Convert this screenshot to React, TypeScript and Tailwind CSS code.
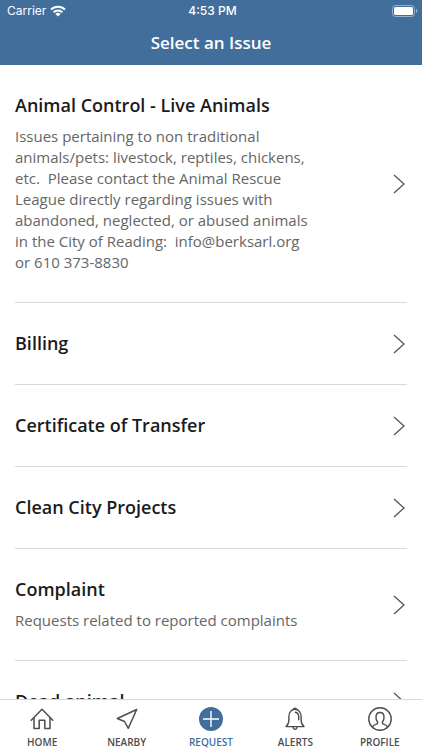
import type { ReactNode } from "react";
import clsx from "clsx";

interface Issue {
  id: string;
  title: string;
  description?: string;
}

interface Tab {
  label: string;
  icon: ReactNode;
  active?: boolean;
}

const issues: Issue[] = [
  {
    id: "animal-control",
    title: "Animal Control - Live Animals",
    description:
      "Issues pertaining to non traditional animals/pets: livestock, reptiles, chickens, etc.  Please contact the Animal Rescue League directly regarding issues with abandoned, neglected, or abused animals in the City of Reading:  info@berksarl.org or 610 373-8830",
  },
  { id: "billing", title: "Billing" },
  { id: "transfer", title: "Certificate of Transfer" },
  { id: "clean-city", title: "Clean City Projects" },
  { id: "complaint", title: "Complaint", description: "Requests related to reported complaints" },
  { id: "dead-animal", title: "Dead animal" },
];

function HomeIcon() {
  return (
    <svg width="24" height="24" viewBox="0 0 24 24" fill="none" stroke="currentColor" strokeWidth="1.5" strokeLinejoin="round" strokeLinecap="round" aria-hidden="true">
      <path d="M1.2 13.200 12 2.300l10.800 10.900" />
      <path d="M4 11v10.500h5.200v-8.300h5.600v8.300H20V11" />
    </svg>
  );
}

function NearbyIcon() {
  return (
    <svg width="24" height="24" viewBox="0 0 24 24" fill="none" stroke="currentColor" strokeWidth="1.5" strokeLinejoin="round" aria-hidden="true">
      <path d="M21.700 2.500 2.300 11.500l7.200 3 3.800 6.800z" />
    </svg>
  );
}

function RequestIcon() {
  return (
    <svg width="24" height="24" viewBox="0 0 24 24" aria-hidden="true">
      <circle cx="12" cy="12" r="12" fill="#426e9b" />
      <path d="M12 4v16M4 12h16" stroke="white" strokeWidth="1.4" />
    </svg>
  );
}

function AlertsIcon() {
  return (
    <svg width="24" height="24" viewBox="0 0 24 24" fill="none" stroke="currentColor" strokeWidth="1.4" strokeLinejoin="round" strokeLinecap="round" aria-hidden="true">
      <path d="M3 19.600c2-1.700 2.900-3.800 2.900-6.700V9.400c0-4 2.500-7.100 6.100-7.100s6.100 3.100 6.100 7.100v3.500c0 2.900.9 5 2.900 6.700z" />
      <path d="M10.500 2.300a1.600 1.600 0 0 1 3 0M10.200 20a1.850 1.850 0 1 0 3.600 0" />
      <path d="M12.300 5.200c2.200.3 3.400 2.200 3.400 4.600v3" />
    </svg>
  );
}

function ProfileIcon() {
  return (
    <svg width="24" height="24" viewBox="0 0 24 24" fill="none" stroke="currentColor" strokeWidth="1.4" strokeLinejoin="round" aria-hidden="true">
      <circle cx="12" cy="12" r="11.200" />
      <path d="M4.400 19.900c.5-1.400 1.700-2 3.600-2.500 1.200-.3 1.700-.8 1.700-1.700 0-.8-.6-1.200-1-2.100-.5-1.100-.7-2.200-.7-3.400 0-2.800 1.500-4.700 4-4.700s4 1.900 4 4.700c0 1.200-.2 2.300-.7 3.400-.4.900-1 1.300-1 2.100 0 .9.500 1.400 1.700 1.700 1.900.5 3.100 1.100 3.600 2.500" />
    </svg>
  );
}

const tabs: Tab[] = [
  { label: "HOME", icon: <HomeIcon /> },
  { label: "NEARBY", icon: <NearbyIcon /> },
  { label: "REQUEST", icon: <RequestIcon />, active: true },
  { label: "ALERTS", icon: <AlertsIcon /> },
  { label: "PROFILE", icon: <ProfileIcon /> },
];

function StatusBar() {
  return (
    <div className="grid h-[22px] grid-cols-3 items-center pl-[7px] pr-1 font-[Inter,sans-serif] text-xs text-white">
      <div className="flex items-center gap-1">
        <span>Carrier</span>
        <svg width="16" height="12" viewBox="0 0 16 12" fill="none" stroke="white" strokeWidth="2" aria-label="Wi-Fi">
          <path d="M1 4.500a10 10 0 0 1 14 0M3.600 7.200a6.300 6.300 0 0 1 8.800 0" />
          <path d="M8 11.600 5.400 9a3.700 3.700 0 0 1 5.200 0z" fill="white" stroke="none" />
        </svg>
      </div>
      <span className="text-center font-medium">4:53 PM</span>
      <svg className="justify-self-end" width="26" height="12" viewBox="0 0 26 12" fill="none" aria-label="Battery full">
        <rect x="0.500" y="0.500" width="22" height="11" rx="3" stroke="white" strokeOpacity="0.45" />
        <rect x="2" y="2" width="19" height="8" rx="1.500" fill="white" />
        <path d="M24 4v4c.8-.3 1.300-1.100 1.300-2S24.800 4.300 24 4z" fill="white" fillOpacity="0.5" />
      </svg>
    </div>
  );
}

function IssueRow({ issue }: { issue: Issue }) {
  return (
    <li className="border-b border-[#d9d9d9]">
      <button type="button" className="flex w-full items-center justify-between py-7 text-left">
        <span className="flex w-[300px] flex-col gap-2">
          <span className="text-lg leading-[25px] font-semibold text-[#1b1b1b]">{issue.title}</span>
          {issue.description && (
            <span className="pb-px text-[15px] leading-[21px] whitespace-pre-wrap text-[#666666]">{issue.description}</span>
          )}
        </span>
        <svg className="mr-0.5 shrink-0" width="12" height="20" viewBox="0 0 12 20" fill="none" stroke="#555555" strokeWidth="1.300" aria-hidden="true">
          <path d="M1 1l10 9-10 9" />
        </svg>
      </button>
    </li>
  );
}

export default function App() {
  return (
    <div className="flex h-screen flex-col bg-white font-['Open_Sans',sans-serif]">
      <header className="bg-[#426e9b]">
        <StatusBar />
        <h1 className="pb-px text-center text-[17px] leading-[42px] font-semibold text-white">Select an Issue</h1>
      </header>
      <main className="min-h-0 flex-1 overflow-y-auto px-[15px] [scrollbar-width:none]">
        <ul>
          {issues.map((issue) => (
            <IssueRow key={issue.id} issue={issue} />
          ))}
        </ul>
      </main>
      <nav className="grid grid-cols-5 border-t border-[#d9d9d9] bg-white pt-[7px] pb-px">
        {tabs.map((tab) => (
          <a
            key={tab.label}
            href="#"
            aria-current={tab.active ? "page" : undefined}
            className={clsx(
              "flex flex-col items-center gap-1 text-[10px] leading-[14px] font-semibold",
              tab.active ? "text-[#426e9b]" : "text-[#4d4d4d]"
            )}
          >
            {tab.icon}
            <span>{tab.label}</span>
          </a>
        ))}
      </nav>
    </div>
  );
}
